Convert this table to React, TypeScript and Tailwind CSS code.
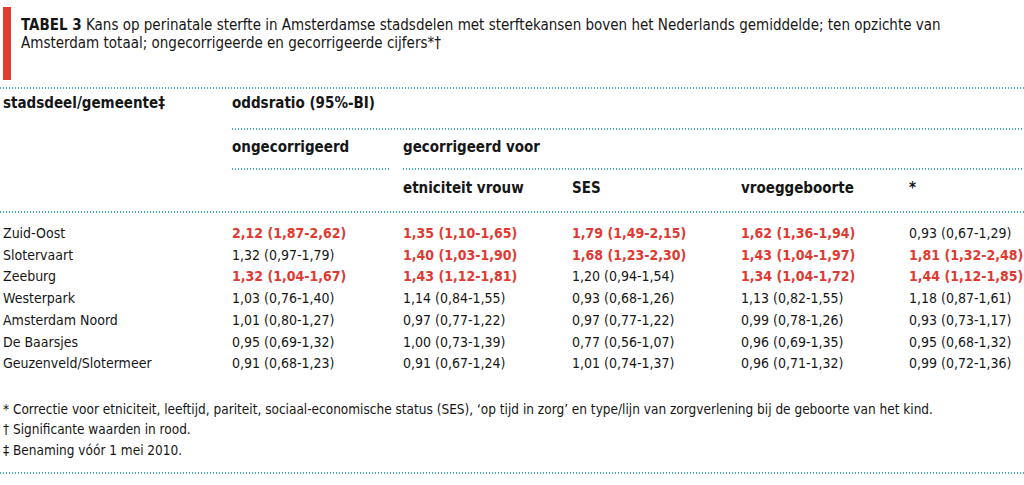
const font = { fontFamily: '"DejaVu Sans Condensed", "Liberation Sans Narrow", "Liberation Sans", sans-serif' };

type Cell = { v: string; red?: boolean };

const rows: { name: string; cells: Cell[] }[] = [
  {
    name: "Zuid-Oost",
    cells: [
      { v: "2,12 (1,87-2,62)", red: true },
      { v: "1,35 (1,10-1,65)", red: true },
      { v: "1,79 (1,49-2,15)", red: true },
      { v: "1,62 (1,36-1,94)", red: true },
      { v: "0,93 (0,67-1,29)" },
    ],
  },
  {
    name: "Slotervaart",
    cells: [
      { v: "1,32 (0,97-1,79)" },
      { v: "1,40 (1,03-1,90)", red: true },
      { v: "1,68 (1,23-2,30)", red: true },
      { v: "1,43 (1,04-1,97)", red: true },
      { v: "1,81 (1,32-2,48)", red: true },
    ],
  },
  {
    name: "Zeeburg",
    cells: [
      { v: "1,32 (1,04-1,67)", red: true },
      { v: "1,43 (1,12-1,81)", red: true },
      { v: "1,20 (0,94-1,54)" },
      { v: "1,34 (1,04-1,72)", red: true },
      { v: "1,44 (1,12-1,85)", red: true },
    ],
  },
  {
    name: "Westerpark",
    cells: [
      { v: "1,03 (0,76-1,40)" },
      { v: "1,14 (0,84-1,55)" },
      { v: "0,93 (0,68-1,26)" },
      { v: "1,13 (0,82-1,55)" },
      { v: "1,18 (0,87-1,61)" },
    ],
  },
  {
    name: "Amsterdam Noord",
    cells: [
      { v: "1,01 (0,80-1,27)" },
      { v: "0,97 (0,77-1,22)" },
      { v: "0,97 (0,77-1,22)" },
      { v: "0,99 (0,78-1,26)" },
      { v: "0,93 (0,73-1,17)" },
    ],
  },
  {
    name: "De Baarsjes",
    cells: [
      { v: "0,95 (0,69-1,32)" },
      { v: "1,00 (0,73-1,39)" },
      { v: "0,77 (0,56-1,07)" },
      { v: "0,96 (0,69-1,35)" },
      { v: "0,95 (0,68-1,32)" },
    ],
  },
  {
    name: "Geuzenveld/Slotermeer",
    cells: [
      { v: "0,91 (0,68-1,23)" },
      { v: "0,91 (0,67-1,24)" },
      { v: "1,01 (0,74-1,37)" },
      { v: "0,96 (0,71-1,32)" },
      { v: "0,99 (0,72-1,36)" },
    ],
  },
];

function Dots({ className = "" }: { className?: string }) {
  return (
    <div
      className={`h-[2px] bg-[linear-gradient(to_right,#3eaed0_50%,transparent_50%)] bg-[length:3px_2px] ${className}`}
    />
  );
}

const grid = "grid grid-cols-[229px_171px_169px_169px_168px_1fr]";

export default function App() {
  return (
    <div className="h-[485px] w-[1024px] overflow-hidden bg-white text-[#161616]" style={font}>
      <div className="flex pt-[7px]">
        <div className="ml-[3px] h-[73px] w-[8px] bg-[#e23a30]" />
        <p className="ml-[10px] pt-[9px] text-[15px] leading-[18px]">
          <span className="font-bold">TABEL 3</span> Kans op perinatale sterfte in Amsterdamse stadsdelen met
          sterftekansen boven het Nederlands gemiddelde; ten opzichte van
          <br />
          Amsterdam totaal; ongecorrigeerde en gecorrigeerde cijfers*†
        </p>
      </div>
      <Dots className="mt-[7px]" />

      <div className="pl-[3px] text-[15px] font-bold">
        <div className={`${grid} pt-[4px]`}>
          <div className="leading-[20px]">stadsdeel/gemeente‡</div>
          <div className="col-span-5 leading-[20px]">oddsratio (95%-BI)</div>
        </div>
        <div className={grid}>
          <div />
          <Dots className="col-span-5 mt-[15px]" />
        </div>
        <div className={grid}>
          <div />
          <div className="pt-[7px] leading-[20px]">ongecorrigeerd</div>
          <div className="col-span-4 pt-[7px] leading-[20px]">gecorrigeerd voor</div>
        </div>
        <div className={`${grid} pt-[11px]`}>
          <div />
          <Dots className="mr-[13px]" />
          <Dots className="col-span-4" />
        </div>
        <div className={`${grid} pt-[8px]`}>
          <div />
          <div />
          <div className="leading-[20px]">etniciteit vrouw</div>
          <div className="leading-[20px]">SES</div>
          <div className="leading-[20px]">vroeggeboorte</div>
          <div className="leading-[20px]">*</div>
        </div>
      </div>
      <Dots className="mt-[13px]" />

      <div className="pl-[3px] pt-[10px] text-[14px]">
        {rows.map((r) => (
          <div key={r.name} className={`${grid} whitespace-nowrap leading-[21.7px]`}>
            <div>{r.name}</div>
            {r.cells.map((c, i) => (
              <div key={i} className={c.red ? "font-bold text-[#df3a32]" : ""}>
                {c.v}
              </div>
            ))}
          </div>
        ))}
      </div>

      <div className="pl-[3px] pt-[24px] text-[13.5px] leading-[20.5px]">
        <p>
          * Correctie voor etniciteit, leeftijd, pariteit, sociaal-economische status (SES), ‘op tijd in zorg’ en
          type/lijn van zorgverlening bij de geboorte van het kind.
        </p>
        <p>† Significante waarden in rood.</p>
        <p>‡ Benaming vóór 1 mei 2010.</p>
      </div>
      <Dots className="mt-[12px]" />
    </div>
  );
}
